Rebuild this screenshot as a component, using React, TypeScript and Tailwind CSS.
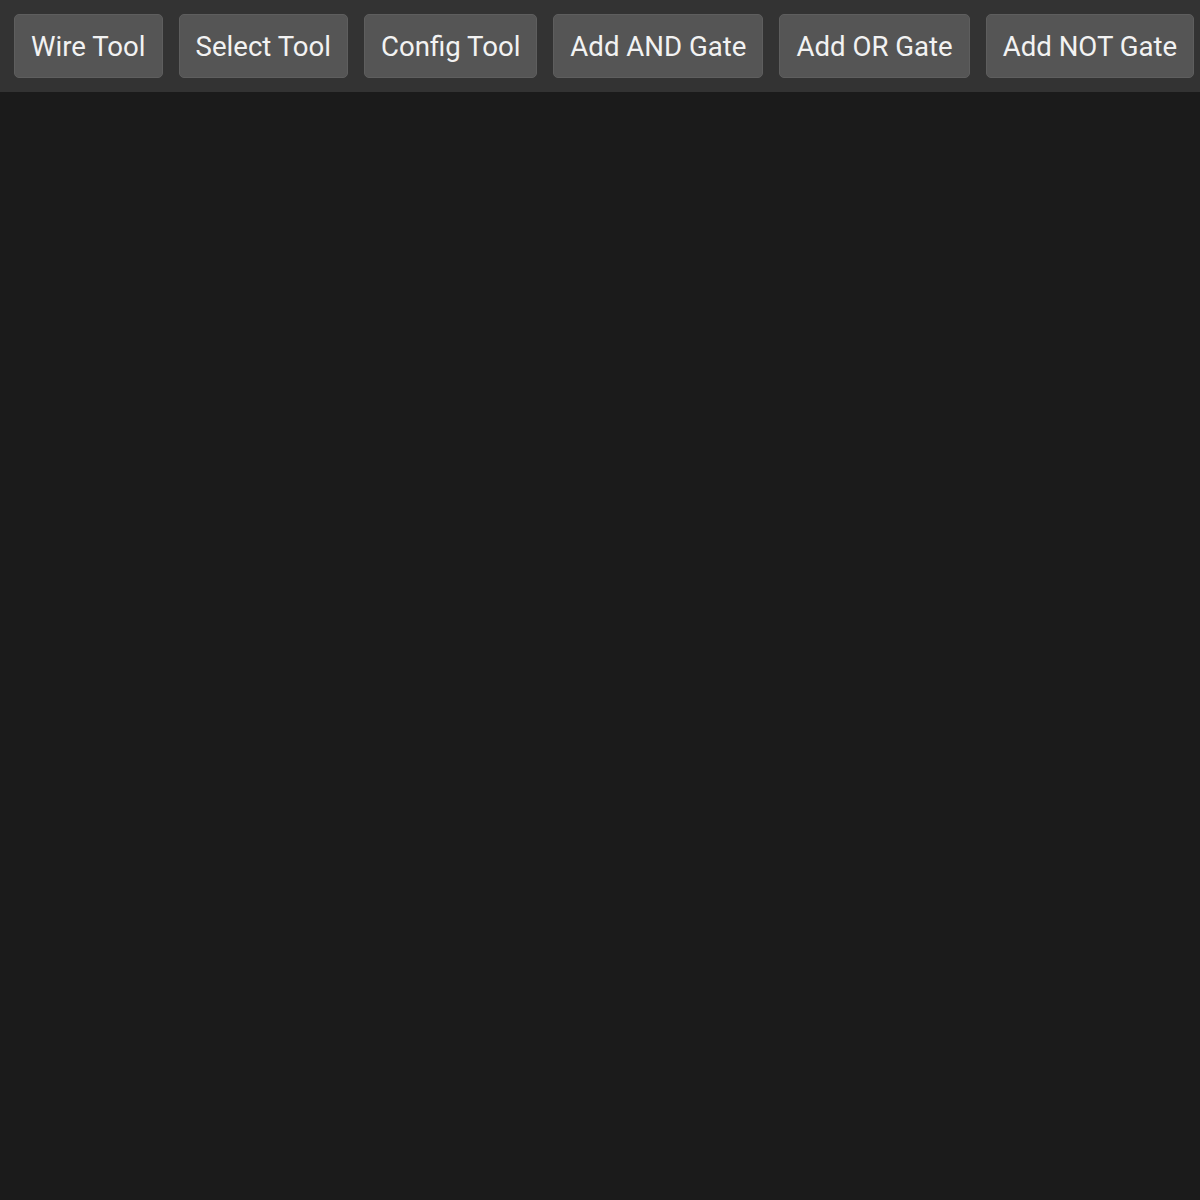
const tools = [
  "Wire Tool",
  "Select Tool",
  "Config Tool",
  "Add AND Gate",
  "Add OR Gate",
  "Add NOT Gate",
];

export default function App() {
  return (
    <div
      className="flex h-[1200px] w-[1200px] flex-col overflow-hidden bg-[#1b1b1b]"
      style={{ fontFamily: "Roboto, 'Liberation Sans', sans-serif" }}
    >
      <div className="flex h-[92px] shrink-0 items-center gap-4 bg-[#333333] px-[14px]">
        {tools.map((t) => (
          <button
            key={t}
            className="h-16 whitespace-nowrap rounded-[5px] border border-[#5e5e5e] bg-[#555555] px-4 pt-0.5 text-[27.6px] text-[#f2f2f2]"
          >
            {t}
          </button>
        ))}
      </div>
      <div className="flex-1" />
    </div>
  );
}
